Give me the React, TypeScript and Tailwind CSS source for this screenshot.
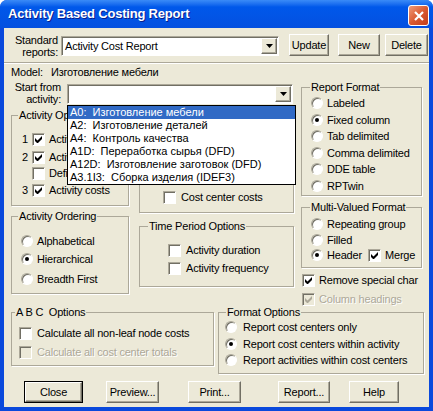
import React from 'react';

const sunken =
  'border border-t-[#ACA899] border-l-[#ACA899] border-r-white border-b-white shadow-[inset_1px_1px_0_#716F64]';
const raised =
  'border border-t-white border-l-white border-r-[#716F64] border-b-[#716F64] shadow-[inset_-1px_-1px_0_#ACA899]';
const disabledText = 'text-[#ACA899] [text-shadow:1px_1px_0_#fff]';

interface BoxProps {
  checked?: boolean;
  disabled?: boolean;
}

const Check: React.FC<BoxProps> = ({ checked, disabled }) => (
  <span
    className={`relative inline-block w-[13px] h-[13px] shrink-0 ${sunken} ${disabled ? 'bg-[#ECE9D8]' : 'bg-white'}`}
  >
    {checked && (
      <svg className="absolute left-[2px] top-[2px]" width="7" height="7" viewBox="0 0 7 7">
        <polygon points="0,2 2.5,4.5 7,0 7,3 2.5,7.5 0,5" fill={disabled ? '#ACA899' : '#000'} />
      </svg>
    )}
  </span>
);

const Radio: React.FC<BoxProps> = ({ checked }) => (
  <span className="relative inline-block w-[12px] h-[12px] shrink-0 rounded-full bg-white border border-t-[#ACA899] border-l-[#ACA899] border-r-white border-b-white shadow-[inset_1px_1px_0_#716F64]">
    {checked && <span className="absolute left-[3px] top-[3px] w-[4px] h-[4px] rounded-full bg-black" />}
  </span>
);

interface GroupProps {
  title?: string;
  legendClass?: string;
  className?: string;
  inner?: string;
  children?: React.ReactNode;
}

// classic etched group box; padding goes on the inner div so the legend keeps its own offset
const Group: React.FC<GroupProps> = ({ title, legendClass = '', className = '', inner = '', children }) => (
  <fieldset className={`min-w-0 border border-[#ACA899] shadow-[1px_1px_0_#fff] ${className}`}>
    {title && <legend className={`px-[1px] leading-[13px] whitespace-pre ${legendClass}`}>{title}</legend>}
    <div className={inner}>{children}</div>
  </fieldset>
);

const Row: React.FC<{ className?: string; children: React.ReactNode }> = ({ className = '', children }) => (
  <div className={`flex items-center h-[14px] whitespace-nowrap ${className}`}>{children}</div>
);

const Combo: React.FC<{ value: string; className?: string }> = ({ value, className = '' }) => (
  <div className={`relative h-[20px] bg-white flex items-center ${sunken} ${className}`}>
    <span className="pl-[3px]">{value}</span>
    <div
      className={`absolute right-[1px] top-[1px] w-[16px] h-[16px] bg-[#ECE9D8] flex items-center justify-center ${raised}`}
    >
      <svg width="7" height="4" viewBox="0 0 7 4">
        <path d="M0 0h7L3.5 4z" fill="#000" />
      </svg>
    </div>
  </div>
);

const Btn: React.FC<{ className?: string; def?: boolean; children: React.ReactNode }> = ({
  className = '',
  def,
  children,
}) => (
  <div className={`h-[22px] shrink-0 ${def ? 'border border-black' : ''} ${className}`}>
    <div className={`h-full w-full flex items-center justify-center bg-[#ECE9D8] ${raised}`}>{children}</div>
  </div>
);

const activities = [
  'A0:  Изготовление мебели',
  'A2:  Изготовление деталей',
  'A4:  Контроль качества',
  'A1D:  Переработка сырья (DFD)',
  'A12D:  Изготовление заготовок (DFD)',
  'A3.1I3:  Сборка изделия (IDEF3)',
];

export default function App() {
  return (
    <div className="w-[433px] h-[411px] bg-white">
      <div className="h-full flex flex-col bg-[#0A49DC] rounded-t-[7px] overflow-hidden">
        {/* title bar */}
        <div className="h-[28px] shrink-0 flex items-start pl-[8px] pr-[4px] bg-linear-to-b from-[#3A8BF7] from-0% via-[#0058EA] via-25% to-[#0450E0]">
          <span className="mt-[6px] text-white font-bold text-[13px] leading-[16px] tracking-[-0.2px] font-['Liberation_Sans',Arial,sans-serif] [text-shadow:1px_1px_#0A1E8C]">
            Activity Based Costing Report
          </span>
          <div className="ml-auto mt-[5px] w-[21px] h-[21px] rounded-[3px] border border-white bg-linear-to-br from-[#EE9A78] via-[#DA5A30] to-[#C23C1A] flex items-center justify-center">
            <svg width="10" height="10" viewBox="0 0 10 10">
              <path d="M1 1L9 9M9 1L1 9" stroke="#fff" strokeWidth="2.2" />
            </svg>
          </div>
        </div>

        {/* body */}
        <div className="mx-[4px] mb-[4px] flex-1 flex flex-col bg-[#ECE9D8] text-black text-[11px] leading-[14px] tracking-[-0.2px] font-['Liberation_Sans',Arial,sans-serif]">
          {/* standard reports */}
          <div className="h-[34px] shrink-0 flex items-start pt-[6px]">
            <div className="ml-[4px] w-[50px] text-right leading-[12px]">
              Standard
              <br />
              reports:
            </div>
            <Combo className="ml-[3px] mt-[2px] w-[218px]" value="Activity Cost Report" />
            <Btn className="ml-[10px] w-[40px]">Update</Btn>
            <Btn className="ml-[9px] w-[42px]">New</Btn>
            <Btn className="ml-[5px] w-[43px]">Delete</Btn>
          </div>
          <div className="h-[2px] shrink-0 border-t border-t-[#ACA899] border-b border-b-white" />

          {/* main area */}
          <div className="h-[242px] shrink-0 flex">
            <div className="w-[297px] flex flex-col">
              <div className="mt-[2px] ml-[7px] h-[13px] flex items-center leading-[13px]">
                <span className="w-[40px]">Model:</span>
                <span>Изготовление мебели</span>
              </div>
              <div className="mt-[2px] flex items-start">
                <div className="w-[57px] text-right leading-[12px]">
                  Start from
                  <br />
                  activity:
                </div>
                <div className="relative ml-[6px] mt-[3px] w-[226px]">
                  <Combo className="w-full" value="" />
                  <div className="absolute z-10 left-0 top-[21px] w-[229px] h-[80px] bg-white border border-black leading-[13px] tracking-normal">
                    {activities.map((a, i) => (
                      <div
                        key={a}
                        className={`h-[13px] pl-[2px] whitespace-pre ${i === 0 ? 'bg-[#316AC5] text-white' : ''}`}
                      >
                        {a}
                      </div>
                    ))}
                  </div>
                </div>
              </div>

              <div className="mt-[4px] ml-[7px] flex">
                <div className="w-[118px] flex flex-col">
                  <Group title="Activity Options" legendClass="ml-[6px]" className="h-[97px]" inner="pl-[10px]">
                    <Row className="mt-[10px]">
                      <span className="w-[10px]">1</span>
                      <Check checked />
                      <span className="ml-[4px]">Activity names</span>
                    </Row>
                    <Row className="mt-[4px]">
                      <span className="w-[10px]">2</span>
                      <Check checked />
                      <span className="ml-[4px]">Activity numbers</span>
                    </Row>
                    <Row className="mt-[2px]">
                      <span className="w-[10px]" />
                      <Check />
                      <span className="ml-[4px]">Definitions</span>
                    </Row>
                    <Row className="mt-[3px]">
                      <span className="w-[10px]">3</span>
                      <Check checked />
                      <span className="ml-[4px]">Activity costs</span>
                    </Row>
                  </Group>
                  <Group
                    title="Activity Ordering"
                    legendClass="ml-[6px]"
                    className="mt-[4px] h-[84px]"
                    inner="pl-[9px]"
                  >
                    <Row className="mt-[11px]">
                      <Radio />
                      <span className="ml-[4px]">Alphabetical</span>
                    </Row>
                    <Row className="mt-[4px]">
                      <Radio checked />
                      <span className="ml-[4px]">Hierarchical</span>
                    </Row>
                    <Row className="mt-[6px]">
                      <Radio />
                      <span className="ml-[4px]">Breadth First</span>
                    </Row>
                  </Group>
                </div>

                <div className="ml-[10px] w-[155px] flex flex-col">
                  {/* its caption and upper rows sit under the open list */}
                  <Group className="mt-[6px] h-[98px]" inner="pl-[23px] pt-[74px]">
                    <Row>
                      <Check />
                      <span className="ml-[5px]">Cost center costs</span>
                    </Row>
                  </Group>
                  <Group
                    title="Time Period Options"
                    legendClass="ml-[8px]"
                    className="mt-[7px] h-[67px]"
                    inner="pl-[28px]"
                  >
                    <Row className="mt-[10px]">
                      <Check />
                      <span className="ml-[5px]">Activity duration</span>
                    </Row>
                    <Row className="mt-[4px]">
                      <Check />
                      <span className="ml-[5px]">Activity frequency</span>
                    </Row>
                  </Group>
                </div>
              </div>
            </div>

            {/* right column */}
            <div className="w-[121px] flex flex-col pt-[17px]">
              <Group title="Report Format" legendClass="ml-[8px]" className="h-[115px]" inner="pl-[9px]">
                <div className="mt-[2px] h-[97px] flex flex-col justify-between">
                  {['Labeled', 'Fixed column', 'Tab delimited', 'Comma delimited', 'DDE table', 'RPTwin'].map((l) => (
                    <Row key={l}>
                      <Radio checked={l === 'Fixed column'} />
                      <span className="ml-[4px]">{l}</span>
                    </Row>
                  ))}
                </div>
              </Group>
              <Group
                title="Multi-Valued Format"
                legendClass="ml-[8px]"
                className="mt-[5px] h-[67px]"
                inner="pl-[9px]"
              >
                <div className="mt-[3px] h-[45px] flex flex-col justify-between">
                  <Row>
                    <Radio />
                    <span className="ml-[4px]">Repeating group</span>
                  </Row>
                  <Row>
                    <Radio />
                    <span className="ml-[4px]">Filled</span>
                  </Row>
                  <Row>
                    <Radio checked />
                    <span className="ml-[4px] w-[41px]">Header</span>
                    <Check checked />
                    <span className="ml-[4px]">Merge</span>
                  </Row>
                </div>
              </Group>
              <Row className="mt-[5px] pl-[1px]">
                <Check checked />
                <span className="ml-[4px]">Remove special char</span>
              </Row>
              <Row className="mt-[5px] pl-[1px]">
                <Check checked disabled />
                <span className={`ml-[4px] ${disabledText}`}>Column headings</span>
              </Row>
            </div>
          </div>

          {/* lower groups */}
          <div className="shrink-0 ml-[7px] flex items-start">
            <Group title="A B C  Options" legendClass="ml-[3px]" className="w-[203px] h-[60px]" inner="pl-[7px]">
              <Row className="mt-[7px]">
                <Check />
                <span className="ml-[5px]">Calculate all non-leaf node costs</span>
              </Row>
              <Row className="mt-[5px]">
                <Check disabled />
                <span className={`ml-[5px] ${disabledText}`}>Calculate all cost center totals</span>
              </Row>
            </Group>
            <Group
              title="Format Options"
              legendClass="ml-[7px]"
              className="ml-[4px] w-[206px] h-[68px]"
              inner="pl-[6px]"
            >
              <div className="mt-[1px] h-[47px] flex flex-col justify-between">
                {[
                  'Report cost centers only',
                  'Report cost centers within activity',
                  'Report activities within cost centers',
                ].map((l, i) => (
                  <Row key={l}>
                    <Radio checked={i === 1} />
                    <span className="ml-[6px]">{l}</span>
                  </Row>
                ))}
              </div>
            </Group>
          </div>

          {/* buttons */}
          <div className="mt-[7px] flex">
            <Btn def className="ml-[20px] w-[59px]">
              Close
            </Btn>
            <Btn className="ml-[23px] w-[53px]">Preview...</Btn>
            <Btn className="ml-[29px] w-[53px]">Print...</Btn>
            <Btn className="ml-[37px] w-[52px]">Report...</Btn>
            <Btn className="ml-[19px] w-[50px]">Help</Btn>
          </div>
        </div>
      </div>
    </div>
  );
}
